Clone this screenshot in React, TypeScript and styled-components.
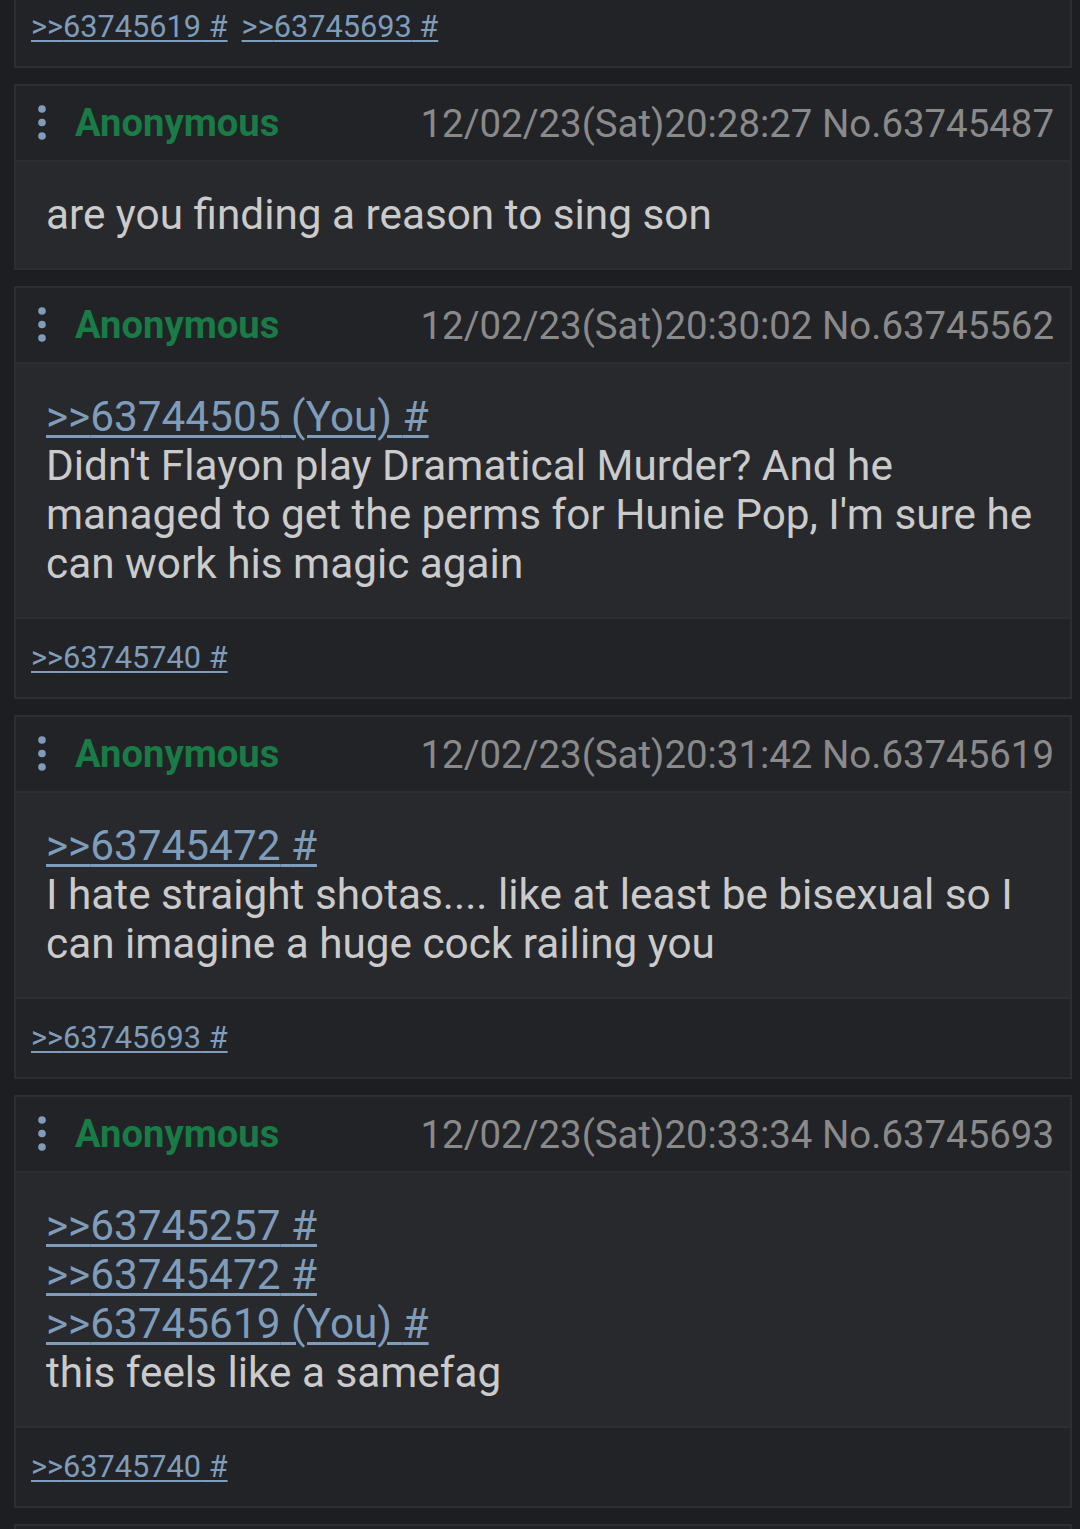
import React from "react";
import styled, { createGlobalStyle } from "styled-components";

const Global = createGlobalStyle`
  html, body {
    margin: 0;
    padding: 0;
    background: #1d1e21;
    overflow: hidden;
  }
  body {
    font-family: Roboto, "Noto Sans", "Liberation Sans", sans-serif;
  }
`;

const Page = styled.div`
  display: flex;
  flex-direction: column;
  gap: 16px;
  margin-top: -14px;
  padding: 0 8px 0 14px;
  background: #1d1e21;
  min-height: 1600px;
`;

const Card = styled.article`
  display: flex;
  flex-direction: column;
  border: 2px solid #2d2e31;
  background: #222327;
`;

const Header = styled.header`
  display: flex;
  align-items: center;
  height: 74px;
  padding: 0 16px 0 19px;
  background: #222327;
  border-bottom: 2px solid #2d2e31;
`;

const Name = styled.span`
  font-size: 38.2px;
  font-weight: 700;
  color: #197b45;
  margin-left: 26px;
`;

const Meta = styled.span`
  margin-left: auto;
  font-size: 38.4px;
  color: #8a8a8a;
`;

const Body = styled.div`
  display: flex;
  flex-direction: column;
  padding: 28px 30px 29px;
  background: #28292d;
  font-size: 42.3px;
  line-height: 49px;
  color: #cbcbcb;
`;

const Quote = styled.a<{ $small?: boolean }>`
  color: #7f9dba;
  text-decoration: underline;
  text-decoration-thickness: ${(p) => (p.$small ? 2 : 3)}px;
  text-underline-offset: ${(p) => (p.$small ? 3 : 4)}px;
  font-size: ${(p) => (p.$small ? 30.7 : 42.3)}px;
  cursor: pointer;
`;

const Line = styled.div``;

const Footer = styled.footer<{ $first?: boolean }>`
  display: flex;
  align-items: center;
  gap: 14px;
  height: 78px;
  padding: 0 15px;
  background: #222327;
  border-top: ${(p) => (p.$first ? "none" : "2px solid #2d2e31")};
  line-height: 30px;
`;

const Dots = () => (
  <svg width="14" height="40" viewBox="0 0 14 40" aria-hidden>
    <circle cx="7" cy="6" r="3.8" fill="#7f9dba" />
    <circle cx="7" cy="19.5" r="3.8" fill="#7f9dba" />
    <circle cx="7" cy="33" r="3.8" fill="#7f9dba" />
  </svg>
);

type Post = {
  date: string;
  no: string;
  quotes: { id: string; you?: boolean }[];
  text: string[];
  replies: string[];
};

const posts: Post[] = [
  {
    date: "12/02/23(Sat)20:28:27",
    no: "63745487",
    quotes: [],
    text: ["are you finding a reason to sing son"],
    replies: [],
  },
  {
    date: "12/02/23(Sat)20:30:02",
    no: "63745562",
    quotes: [{ id: "63744505", you: true }],
    text: [
      "Didn't Flayon play Dramatical Murder? And he",
      "managed to get the perms for Hunie Pop, I'm sure he",
      "can work his magic again",
    ],
    replies: ["63745740"],
  },
  {
    date: "12/02/23(Sat)20:31:42",
    no: "63745619",
    quotes: [{ id: "63745472" }],
    text: [
      "I hate straight shotas.... like at least be bisexual so I",
      "can imagine a huge cock railing you",
    ],
    replies: ["63745693"],
  },
  {
    date: "12/02/23(Sat)20:33:34",
    no: "63745693",
    quotes: [{ id: "63745257" }, { id: "63745472" }, { id: "63745619", you: true }],
    text: ["this feels like a samefag"],
    replies: ["63745740"],
  },
];

const Replies = ({ ids, first }: { ids: string[]; first?: boolean }) => (
  <Footer $first={first}>
    {ids.map((id) => (
      <Quote key={id} $small>
        &gt;&gt;{id} #
      </Quote>
    ))}
  </Footer>
);

export default function App() {
  return (
    <>
      <Global />
      <Page>
        <Card>
          <Replies ids={["63745619", "63745693"]} first />
        </Card>
        {posts.map((p) => (
          <Card key={p.no}>
            <Header>
              <Dots />
              <Name>Anonymous</Name>
              <Meta>
                {p.date} No.{p.no}
              </Meta>
            </Header>
            <Body>
              {p.quotes.map((q) => (
                <Line key={q.id}>
                  <Quote>
                    &gt;&gt;{q.id} {q.you ? "(You) " : ""}#
                  </Quote>
                </Line>
              ))}
              {p.text.map((t, i) => (
                <Line key={i}>{t}</Line>
              ))}
            </Body>
            {p.replies.length > 0 && <Replies ids={p.replies} />}
          </Card>
        ))}
        <Card>
          <Header />
        </Card>
      </Page>
    </>
  );
}
